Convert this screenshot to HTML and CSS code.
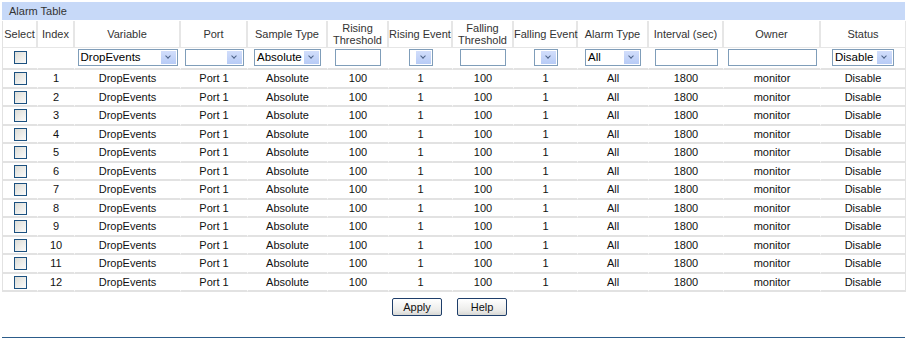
FILE: index.html
```html
<!DOCTYPE html>
<html lang="en">
<head>
    <meta charset="UTF-8">
    <link rel="stylesheet" href="styles.css">
    <title>Alarm Table</title>
</head>
<body>
    <div class="panel">
        <div class="panel-title">Alarm Table</div>
        <table class="alarm-table">
            <colgroup>
                <col style="width:35px"><col style="width:37px"><col style="width:106px"><col style="width:67px">
                <col style="width:80px"><col style="width:61px"><col style="width:64px"><col style="width:61px">
                <col style="width:64px"><col style="width:71px"><col style="width:75px"><col style="width:97px">
                <col style="width:85px">
            </colgroup>
            <thead>
                <tr class="head">
                    <th>Select</th>
                    <th>Index</th>
                    <th>Variable</th>
                    <th>Port</th>
                    <th>Sample Type</th>
                    <th>Rising<br>Threshold</th>
                    <th>Rising Event</th>
                    <th>Falling<br>Threshold</th>
                    <th>Falling Event</th>
                    <th>Alarm Type</th>
                    <th>Interval (sec)</th>
                    <th>Owner</th>
                    <th class="last">Status</th>
                </tr>
                <tr class="filter">
                    <td><span class="check"></span></td>
                    <td></td>
                    <td><span class="sel w-var"><span class="sel-text">DropEvents</span><span class="sel-arrow"></span></span></td>
                    <td><span class="sel w-port"><span class="sel-text"></span><span class="sel-arrow"></span></span></td>
                    <td><span class="sel w-sample"><span class="sel-text">Absolute</span><span class="sel-arrow"></span></span></td>
                    <td><input class="box w-thr" type="text"></td>
                    <td><span class="sel w-evt"><span class="sel-text"></span><span class="sel-arrow"></span></span></td>
                    <td><input class="box w-thr" type="text"></td>
                    <td><span class="sel w-evt"><span class="sel-text"></span><span class="sel-arrow"></span></span></td>
                    <td><span class="sel w-alarm"><span class="sel-text">All</span><span class="sel-arrow"></span></span></td>
                    <td><input class="box w-int" type="text"></td>
                    <td><input class="box w-owner" type="text"></td>
                    <td><span class="sel w-status"><span class="sel-text">Disable</span><span class="sel-arrow"></span></span></td>
                </tr>
            </thead>
            <tbody id="rows"></tbody>
        </table>

        <div class="actions">
            <button class="btn">Apply</button>
            <button class="btn">Help</button>
        </div>
        <hr class="rule">
    </div>

    <script>
        // fill the 12 alarm entries
        var rows = document.getElementById('rows');
        for (var i = 1; i <= 12; i++) {
            rows.innerHTML += '<tr>' +
                '<td><span class="check"></span></td>' +
                '<td>' + i + '</td>' +
                '<td>DropEvents</td>' +
                '<td>Port 1</td>' +
                '<td>Absolute</td>' +
                '<td>100</td>' +
                '<td>1</td>' +
                '<td>100</td>' +
                '<td>1</td>' +
                '<td>All</td>' +
                '<td>1800</td>' +
                '<td>monitor</td>' +
                '<td>Disable</td>' +
                '</tr>';
        }
    </script>
</body>
</html>
```

FILE: styles.css
```css
* {
    margin: 0;
    padding: 0;
    box-sizing: border-box;
}
body {
    font-family: "Liberation Sans", Arial, sans-serif;
    font-size: 11px;
    color: #111;
    background: #fff;
}
.panel {
    padding: 2px 2px 0 2px;
}
.panel-title {
    height: 18px;
    line-height: 18px;
    padding-left: 7px;
    background-color: #c7d9f8;
    color: #333;
}

.alarm-table {
    width: 903px;
    table-layout: fixed;
    border-collapse: separate;
    border-spacing: 0;
    border-left: 1px solid #e2e2e2;
    margin-top: 1px;
}
.alarm-table th {
    height: 27px;
    font-weight: normal;
    color: #333;
    line-height: 12px;
    border-right: 2px solid #e6e6e6;
    border-bottom: 1px solid #e6e6e6;
    white-space: nowrap;
}
.alarm-table th.last {
    border-right: 1px solid #e6e6e6;
}
.alarm-table td {
    text-align: center;
    border-bottom: 2px solid #e2e2e2;
    border-right: 1px solid #fff;
    height: 18.5px;
    padding: 0;
}
.alarm-table .filter td {
    height: 22px;
    padding-bottom: 2px;
}
.alarm-table td:last-child {
    border-right: 1px solid #e2e2e2;
}

.check {
    display: inline-block;
    width: 13px;
    height: 13px;
    border: 1px solid #1c5180;
    background: linear-gradient(135deg, #dcdcd6, #fbfbfa);
    vertical-align: middle;
}

.sel {
    display: inline-flex;
    height: 17px;
    border: 1px solid #7f9db9;
    background: #fff;
    vertical-align: middle;
    text-align: left;
    font-size: 11.5px;
    color: #000;
}
.sel-text {
    flex: 1;
    line-height: 15px;
    padding-left: 2px;
    white-space: nowrap;
}
.sel-arrow {
    width: 15px;
    margin: 1px;
    background: linear-gradient(#d2defb, #b7cbf6);
    position: relative;
}
.sel-arrow::after {
    content: "";
    position: absolute;
    left: 5px;
    top: 3px;
    width: 3px;
    height: 3px;
    border-right: 1.5px solid #4d6185;
    border-bottom: 1.5px solid #4d6185;
    transform: rotate(45deg);
}
.w-var { width: 100px; }
.w-port { width: 59px; }
.w-sample { width: 67px; }
.w-evt { width: 24px; }
.w-alarm { width: 56px; }
.w-status { width: 62px; }

.box {
    height: 17px;
    border: 1px solid #7f9db9;
    background: #fff;
    vertical-align: middle;
}
.w-thr { width: 46px; }
.w-int { width: 63px; }
.w-owner { width: 89px; }

.actions {
    display: flex;
    justify-content: center;
    gap: 15px;
    padding: 6px 8px 0 0;
}
.btn {
    width: 50px;
    height: 18px;
    border: 1px solid #1e3e6a;
    border-radius: 2px;
    background: linear-gradient(#ffffff, #ececea 70%, #d8d8d4);
    font-family: "Liberation Sans", Arial, sans-serif;
    font-size: 11px;
    color: #111;
}

.rule {
    margin-top: 21px;
    border: none;
    border-top: 1px solid #2c5c8a;
    height: 1px;
}
```
